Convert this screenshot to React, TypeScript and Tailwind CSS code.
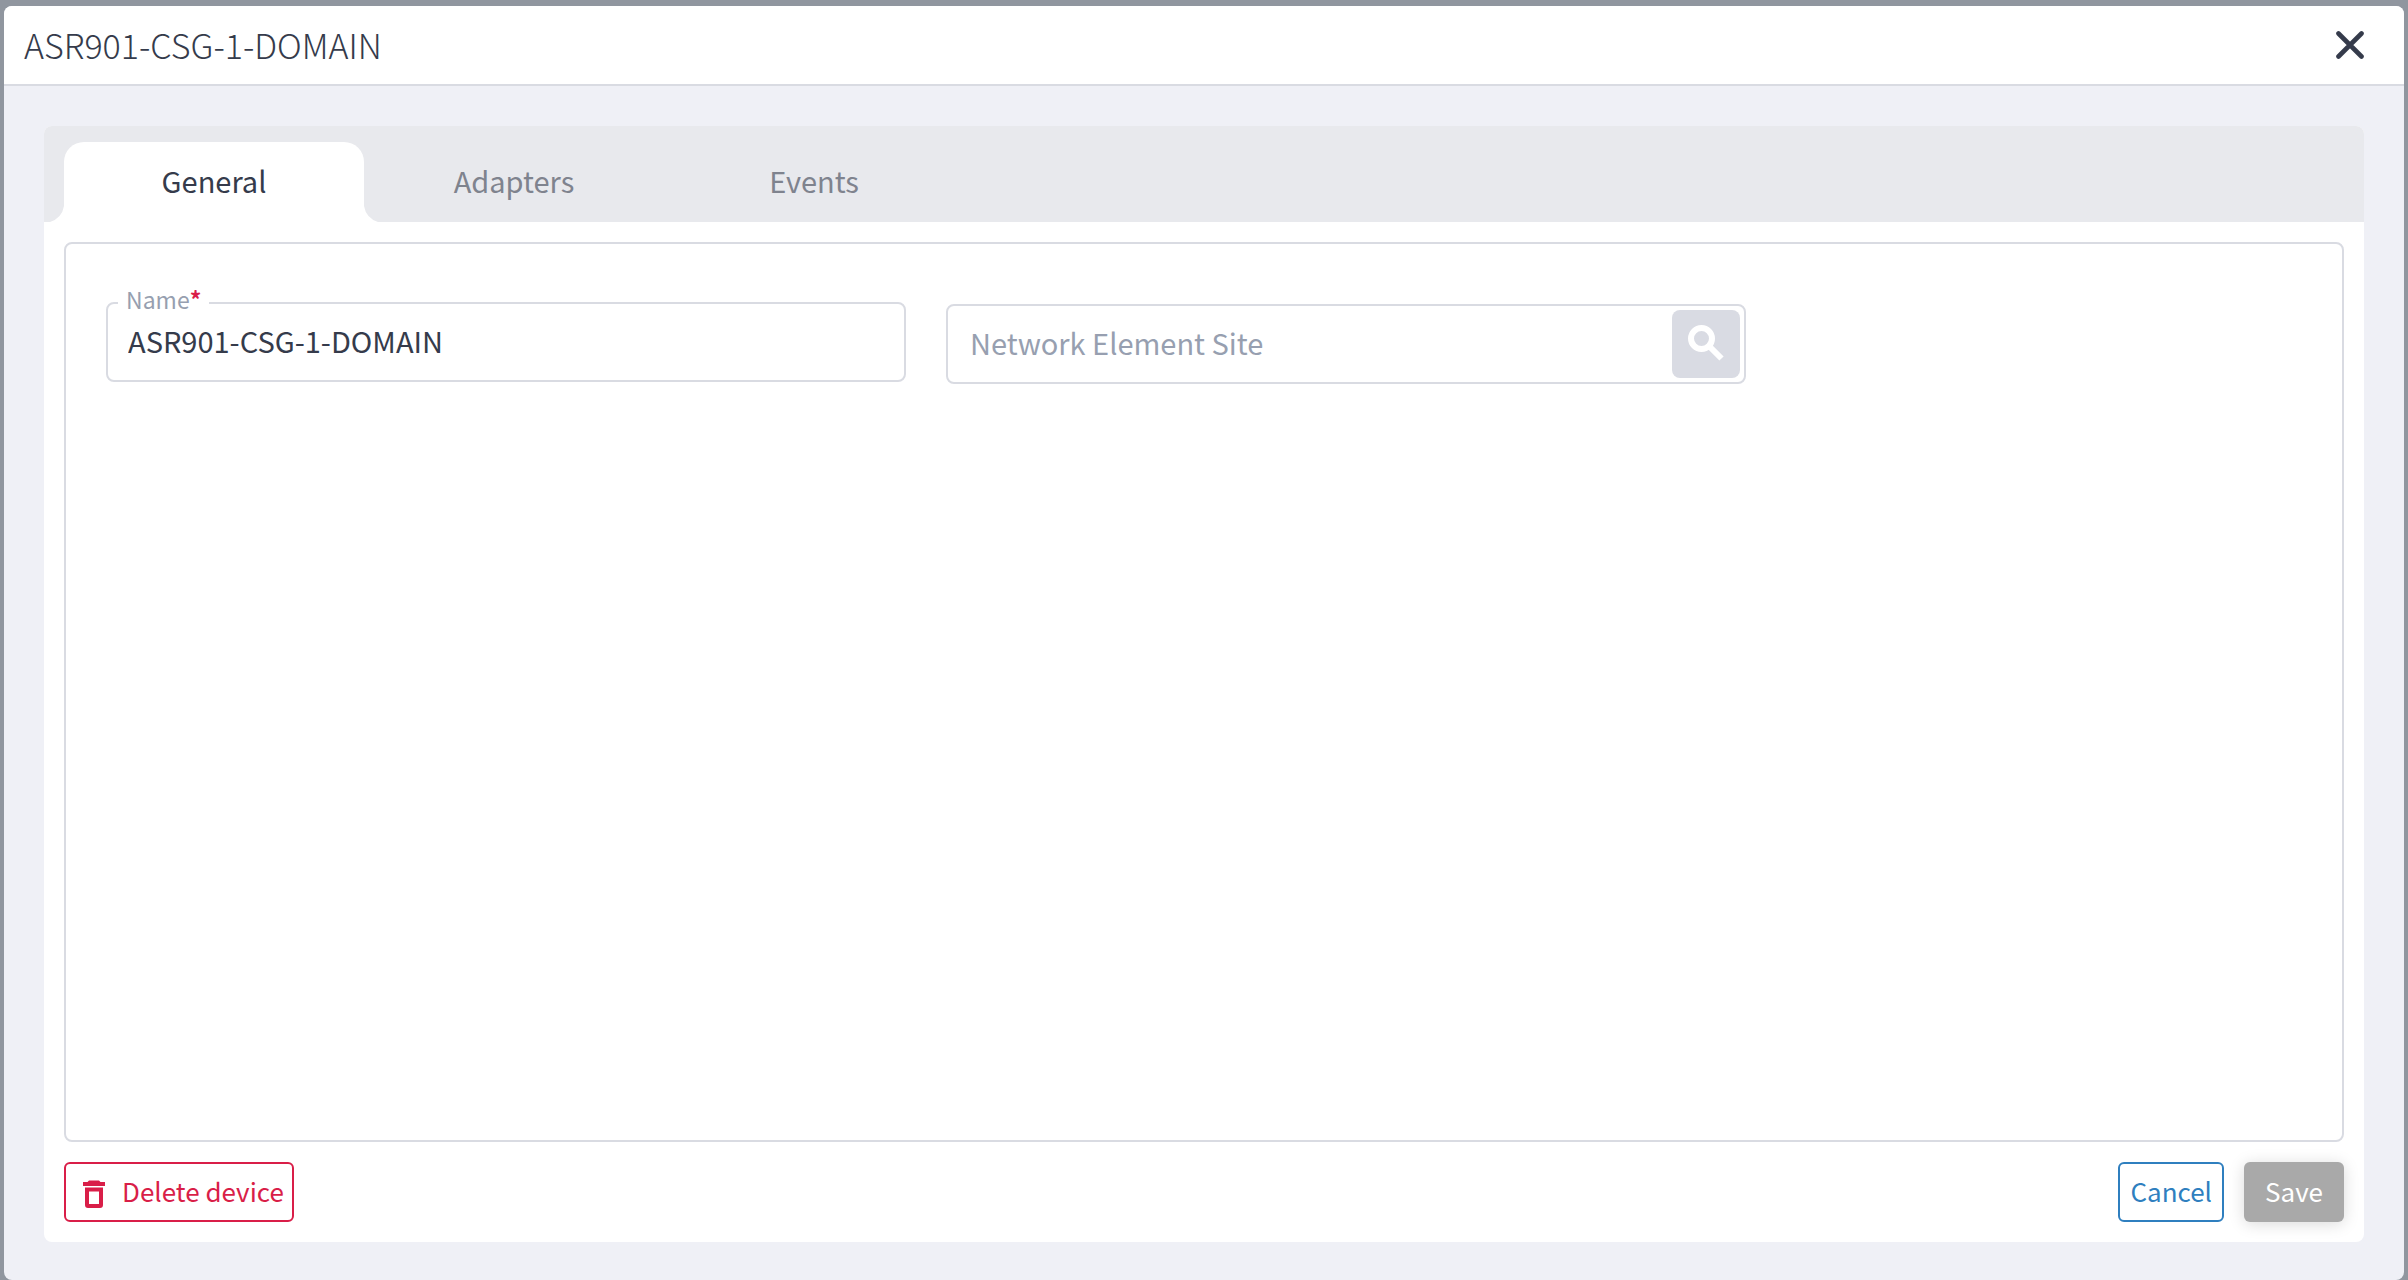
import { useState } from 'react'

const TABS = ['General', 'Adapters', 'Events']

export default function App() {
  const [tab, setTab] = useState('General')
  const [name, setName] = useState('ASR901-CSG-1-DOMAIN')
  const [site, setSite] = useState('')

  return (
    <div className="min-h-screen bg-[#90969f] px-1 pt-1.5 flex flex-col font-['Noto_Sans_CJK_SC','Noto_Sans',sans-serif] text-[#353b4b]">
      <div role="dialog" aria-labelledby="dialog-title" className="flex-1 flex flex-col rounded-lg overflow-hidden bg-[#eff0f6]">
        <header className="h-20 shrink-0 flex items-center justify-between bg-white border-b-2 border-[#d9dbe2] pl-5 pr-9">
          <h1 id="dialog-title" className="text-[34px] leading-[48px] font-light">{name}</h1>
          <button aria-label="Close" className="p-1">
            <svg viewBox="0 0 28 28" className="size-7" fill="none" stroke="currentColor" strokeWidth="4.6" strokeLinecap="round">
              <path d="M2.500 2.500 25.500 25.500M25.500 2.500 2.500 25.500" />
            </svg>
          </button>
        </header>

        <main className="flex-1 flex flex-col px-10 pt-10 pb-[38px]">
          <div className="flex-1 flex flex-col bg-white rounded-lg overflow-hidden">
            <div role="tablist" className="flex bg-[#e8e9ed] pl-5 pt-4">
              {TABS.map(t => <Tab key={t} label={t} active={t === tab} onClick={() => setTab(t)} />)}
            </div>

            <div className="flex-1 flex flex-col p-5">
              <div className="flex-1 border-2 border-[#d9dbe2] rounded-lg px-10 pt-10">
                <div className="flex gap-10">
                  <fieldset className="w-[800px] min-w-0 h-[98px] border-2 border-[#d9dbe2] rounded-lg pl-2.5">
                    <legend className="px-2 pb-2 text-[23px] leading-[30px] text-[#979fb0]">
                      <label htmlFor="name">Name<span className="font-bold text-[#d91e48]">*</span></label>
                    </legend>
                    <input id="name" value={name} onChange={e => setName(e.target.value)}
                      className="block w-full px-2.5 text-[29px] leading-9 outline-none" />
                  </fieldset>
                  <div className="w-[800px] h-20 mt-5 flex items-center border-2 border-[#d9dbe2] rounded-lg pl-[22px] pr-1">
                    <input aria-label="Network Element Site" placeholder="Network Element Site" value={site} onChange={e => setSite(e.target.value)}
                      className="flex-1 min-w-0 pb-1 text-[29px] leading-10 outline-none placeholder:text-[#979fb0]" />
                    <button aria-label="Search" className="size-[68px] pb-0.5 rounded-lg bg-[#d9dbe3] text-white flex items-center justify-center">
                      <svg viewBox="0 0 36 36" className="size-9" fill="none" stroke="currentColor" strokeWidth="6">
                        <circle cx="13.5" cy="13.5" r="10.5" />
                        <path d="M21 21 33.500 33.500" />
                      </svg>
                    </button>
                  </div>
                </div>
              </div>

              <footer className="pt-5 flex items-center gap-5 text-[26px] leading-10">
                <button className="h-[60px] mr-auto flex items-center gap-4 border-2 border-[#d91e48] rounded-md pl-4 pr-2 text-[#d91e48]">
                  <svg viewBox="0 0 24 28" className="w-6 h-7 mt-1" fill="currentColor">
                    <path d="M7 0.500h10l1.500 1.500H23v4H1V2h4.500zM3 7.500h18V25a3 3 0 0 1-3 3H6a3 3 0 0 1-3-3zm4 4v12.500h10V11.500z" fillRule="evenodd" />
                  </svg>
                  <span className="pb-0.5">Delete device</span>
                </button>
                <button className="h-[60px] border-2 border-[#2f7fbf] rounded-md px-2.5 pb-0.5 text-[#2f7fbf]">Cancel</button>
                <button disabled className="h-[60px] w-[100px] rounded-md pb-0.5 bg-[#a9a9a9] text-white shadow-[0_2px_16px_rgba(0,0,0,0.15)]">Save</button>
              </footer>
            </div>
          </div>
        </main>
      </div>
    </div>
  )
}

function Tab({ label, active, onClick }: { label: string; active: boolean; onClick: () => void }) {
  return (
    <button role="tab" aria-selected={active} onClick={onClick}
      className={`relative w-[300px] h-20 pb-1 text-[29px] leading-10 ${active ? 'bg-white rounded-t-[20px]' : 'text-[#7f838e]'}`}>
      {label}
      {active && (
        <>
          <svg viewBox="0 0 14 16" className="absolute right-full bottom-0 w-3.5 h-4 text-white" fill="currentColor"><path d="M14 0Q12 12 0 16H14z" /></svg>
          <svg viewBox="0 0 14 16" className="absolute left-full bottom-0 w-3.5 h-4 text-white" fill="currentColor"><path d="M0 0Q2 12 14 16H0z" /></svg>
        </>
      )}
    </button>
  )
}
